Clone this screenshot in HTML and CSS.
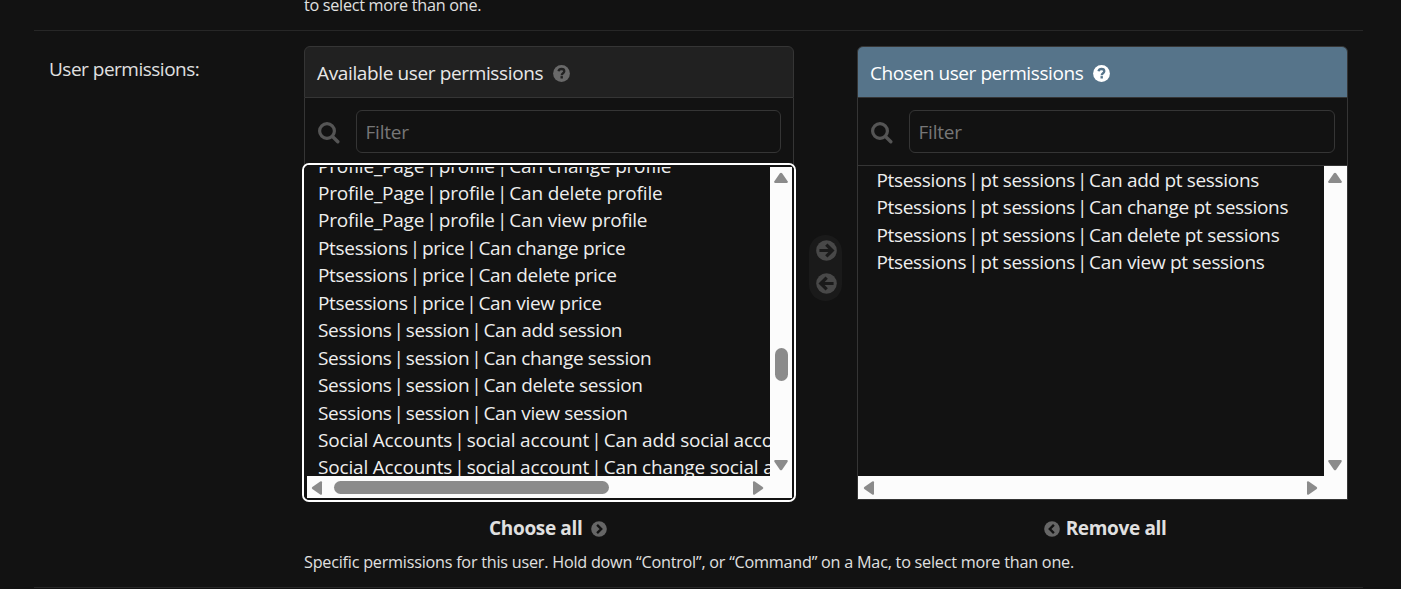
FILE: index.html
```
<!DOCTYPE html>
<html lang="en">
<head>
<meta charset="utf-8">
<title>User permissions</title>
<link rel="stylesheet" href="styles.css">
</head>
<body>
<svg class="defs" width="0" height="0">
  <symbol id="search" viewBox="0 0 22 22"><circle cx="9" cy="9" r="7.4" fill="none" stroke="currentColor" stroke-width="3.2"/><path d="M14.5 14.5l5.3 5.3" stroke="currentColor" stroke-width="3.4" stroke-linecap="round"/></symbol>
  <symbol id="help" viewBox="0 0 17 17"><circle cx="8.5" cy="8.5" r="8.4" fill="currentColor"/><path d="M5.5 6.2C5.9 4.7 7 4 8.5 4c1.6 0 2.8.9 2.8 2.3 0 2-2.6 1.8-2.6 3.9" fill="none" stroke="var(--hole)" stroke-width="2.3"/><path d="M7.5 11.1h2.4v2.4H7.5z" fill="var(--hole)"/></symbol>
  <symbol id="arrow" viewBox="0 0 22 22"><circle cx="11" cy="11" r="10.8" fill="currentColor"/><path d="M3.6 11h13M10.8 4.8L17 11l-6.2 6.2" fill="none" stroke="#1a1a1a" stroke-width="3.4"/></symbol>
  <symbol id="chevron" viewBox="0 0 16 16"><circle cx="8" cy="8" r="7.8" fill="currentColor"/><path d="M6.1 3.9L10.2 8l-4.1 4.1" fill="none" stroke="#121212" stroke-width="2.4"/></symbol>
  <symbol id="tri" viewBox="0 0 16 12"><path d="M6.9 1.3L1.4 9.2Q.6 11 2.2 11h11.6q1.6 0 .8-1.8L9.1 1.3Q8 .2 6.9 1.3z" fill="#8b8b8b"/></symbol>
</svg>
<main class="page">
  <p class="help previous">to select more than one.</p>
  <section class="row">
    <label class="label">User permissions:</label>
    <div class="field">
      <div class="selector">
        <div class="panel">
          <h2 class="head available"><span>Available user permissions</span><svg class="help-icon"><use href="#help"/></svg></h2>
          <div class="filter"><svg class="search"><use href="#search"/></svg><div class="input">Filter</div></div>
          <div class="list focused">
            <ul class="options scrolled">
              <li class="profile">Profile_Page <b>|</b> profile <b>|</b> Can change profile</li>
              <li class="profile">Profile_Page <b>|</b> profile <b>|</b> Can delete profile</li>
              <li class="profile">Profile_Page <b>|</b> profile <b>|</b> Can view profile</li>
              <li>Ptsessions <b>|</b> price <b>|</b> Can change price</li>
              <li>Ptsessions <b>|</b> price <b>|</b> Can delete price</li>
              <li>Ptsessions <b>|</b> price <b>|</b> Can view price</li>
              <li>Sessions <b>|</b> session <b>|</b> Can add session</li>
              <li>Sessions <b>|</b> session <b>|</b> Can change session</li>
              <li>Sessions <b>|</b> session <b>|</b> Can delete session</li>
              <li>Sessions <b>|</b> session <b>|</b> Can view session</li>
              <li class="social">Social Accounts <b>|</b> social account <b>|</b> Can add social account</li>
              <li class="social">Social Accounts <b>|</b> social account <b>|</b> Can change social account</li>
            </ul>
            <div class="vbar"><svg class="tri"><use href="#tri"/></svg><i class="vthumb"></i><svg class="tri down"><use href="#tri"/></svg></div>
            <div class="hbar"><svg class="tri left"><use href="#tri"/></svg><i class="hthumb"></i><svg class="tri right"><use href="#tri"/></svg></div>
          </div>
          <a class="all choose"><span>Choose all</span><svg class="chev"><use href="#chevron"/></svg></a>
        </div>
        <div class="mover"><svg><use href="#arrow"/></svg><svg class="flip"><use href="#arrow"/></svg></div>
        <div class="panel wide">
          <h2 class="head chosen"><span>Chosen user permissions</span><svg class="help-icon"><use href="#help"/></svg></h2>
          <div class="filter"><svg class="search"><use href="#search"/></svg><div class="input">Filter</div></div>
          <div class="list">
            <ul class="options selected">
              <li>Ptsessions <b>|</b> pt sessions <b>|</b> Can add pt sessions</li>
              <li>Ptsessions <b>|</b> pt sessions <b>|</b> Can change pt sessions</li>
              <li>Ptsessions <b>|</b> pt sessions <b>|</b> Can delete pt sessions</li>
              <li>Ptsessions <b>|</b> pt sessions <b>|</b> Can view pt sessions</li>
            </ul>
            <div class="vbar"><svg class="tri"><use href="#tri"/></svg><svg class="tri down"><use href="#tri"/></svg></div>
            <div class="hbar"><svg class="tri left"><use href="#tri"/></svg><svg class="tri right"><use href="#tri"/></svg></div>
          </div>
          <a class="all remove"><svg class="chev flip"><use href="#chevron"/></svg><span>Remove all</span></a>
        </div>
      </div>
      <p class="help note">Specific permissions for this user. Hold down “Control”, or “Command” on a Mac, to select more than one.</p>
    </div>
  </section>
</main>
</body>
</html>
```
FILE: styles.css
```
* { box-sizing: border-box; }
body { margin: 0; background: #121212; color: #e8e8e8; font: 19px/27.45px "Open Sans", "Noto Sans", sans-serif; height: 589px; overflow: hidden; }
svg { display: block; flex: none; }
.defs { position: absolute; }
h2, p, ul { margin: 0; padding: 0; list-style: none; font-weight: 400; }
.page { padding: 0 38px 0 34px; }
.help { font-size: 16.2px; line-height: 22px; letter-spacing: -0.23px; white-space: nowrap; color: #e0e0e0; }
.previous { height: 30px; padding-left: 270px; line-height: 10px; letter-spacing: -0.28px; }
.row { display: flex; height: 558px; border-top: 1px solid #272727; border-bottom: 1px solid #272727; padding: 15px 15px 0; }
.label { width: 255px; padding-top: 10px; letter-spacing: -0.5px; color: #e0e0e0; }
.field { width: 1044px; }
.selector { display: flex; align-items: flex-start; }
.panel { width: 490px; flex: none; }
.wide { width: 490.6px; }
.head { display: flex; align-items: center; height: 52px; padding: 2px 12px 0; gap: 10px; border: 1px solid #353535; border-radius: 6px 6px 0 0; font-size: 19px; letter-spacing: -0.37px; }
.head span { padding-top: 1px; }
.available { background: #212121; --hole: #212121; }
.chosen { background: #56748a; color: #fff; --hole: #56748a; letter-spacing: -0.42px; }
.help-icon { width: 17px; height: 17px; color: #696969; }
.chosen .help-icon { color: #fff; }
.filter { display: flex; align-items: center; height: 67px; padding: 1px 12px 0 13px; border: solid #353535; border-width: 0 1px; gap: 16px; }
.search { width: 22px; height: 22px; color: #555; margin: 1px 0 0 -0.5px; }
.input { flex: 1; height: 43px; border: 1px solid #353535; border-radius: 6px; padding: 8px 9px; color: #777; margin-top: -2px; letter-spacing: -0.2px; }
.list { display: grid; grid-template: 310px 23px / 1fr 23px; height: 335px; border: 1px solid #353535; }
.focused { grid-template: 309px 22px / 1fr 22px; padding: 1px 1px 1px 2px; border-radius: 5px; box-shadow: 0 0 0 2px #fff; border-color: #121212; }
.options { overflow: hidden; min-width: 0; white-space: nowrap; color: #eee; letter-spacing: -0.32px; padding-top: 1px; }
.options li { height: 27.45px; }
.options b { font-weight: 400; margin: 0 -2.6px; }
.scrolled { padding: 0 0 0 11px; }
.scrolled li:first-child { margin-top: -14.4px; }
.options .profile { letter-spacing: -0.2px; }
.options .social { letter-spacing: -0.18px; }
.selected { padding-left: 18.4px; }
.vbar { background: #fcfcfc; display: flex; flex-direction: column; align-items: center; padding: 6px 0 5px; }
.focused .vbar { padding-top: 5px; }
.hbar { grid-column: 1 / 3; background: #fcfcfc; display: flex; align-items: center; padding: 1px 27px 0 3px; }
.focused .hbar { padding: 1px 26px 0 2px; }
.tri { width: 16px; height: 12px; }
.down { transform: rotate(180deg); margin-top: auto; }
.left { transform: rotate(-90deg); }
.right { transform: rotate(90deg); margin-left: auto; }
.vthumb { width: 13px; height: 33px; border-radius: 7px; background: #8b8b8b; margin-top: 164px; }
.hthumb { width: 275px; height: 13px; border-radius: 7px; background: #8b8b8b; margin-left: 9px; }
.mover { width: 33px; height: 66px; margin: 189px 15px 0; border-radius: 17px; background: #1a1a1a; display: flex; flex-direction: column; padding: 5px 5px 0 6.5px; gap: 12px; color: #484848; flex: none; }
.mover svg { width: 21px; height: 21px; }
.flip { transform: scaleX(-1); }
.all { display: flex; align-items: center; justify-content: center; height: 44px; padding-top: 13px; font-weight: 700; letter-spacing: -0.35px; gap: 9px; color: #e0e0e0; }
.choose { padding-right: 1.5px; }
.chev { width: 16px; height: 16px; color: #666; }
.remove { gap: 6px; padding-left: 5.5px; }
.note { padding-top: 7px; }
```
